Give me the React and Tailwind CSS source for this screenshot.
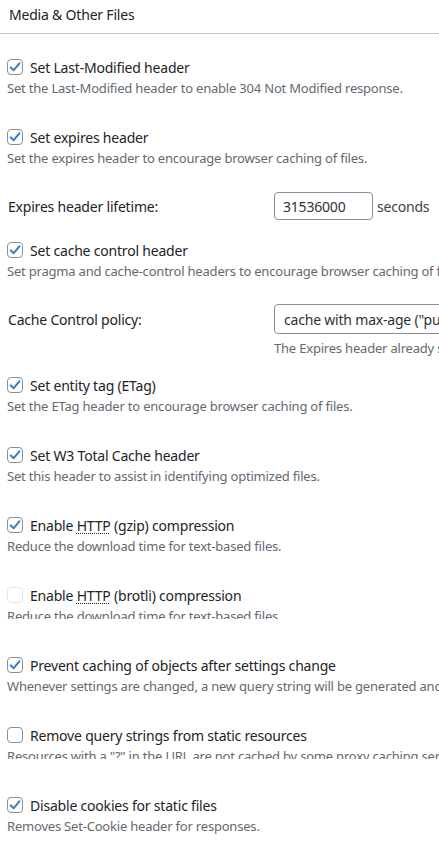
import React from "react";

const font = { fontFamily: '"Noto Sans", "Liberation Sans", sans-serif' };

function Check({ checked, disabled }) {
  return (
    <span
      className={
        "w-4 h-4 shrink-0 rounded-[4px] border bg-white flex items-center justify-center " +
        (disabled ? "border-[#e2e4e7]" : "border-[#8c8f94]")
      }
    >
      {checked && (
        <svg width="14" height="14" viewBox="0 0 14 14">
          <path
            d="M2.8 7.4 L5.7 10.2 L11.4 3.4"
            fill="none"
            stroke="#3582c4"
            strokeWidth="2.1"
            strokeLinecap="round"
            strokeLinejoin="round"
          />
        </svg>
      )}
    </span>
  );
}

function Abbr({ children }) {
  return <span className="underline decoration-dotted decoration-1 underline-offset-2">{children}</span>;
}

function Item({ checked = true, disabled, label, desc, clip, className = "" }) {
  return (
    <div className={"flex flex-col " + className}>
      <label className="flex items-center h-5 gap-2 text-[14px] text-[#1d2327] whitespace-nowrap">
        <Check checked={checked} disabled={disabled} />
        <span className="ml-[-1px]">{label}</span>
      </label>
      <div className={"mt-[1px] overflow-hidden " + (clip ? clip : "h-5")}>
        <p className="text-[13px] leading-5 text-[#646970] whitespace-nowrap">{desc}</p>
      </div>
    </div>
  );
}

export default function App() {
  return (
    <div className="w-[439px] min-h-[841px] bg-white overflow-hidden tracking-[-0.2px]" style={font}>
      <div className="h-[34px] border-b border-[#c3c4c7] pl-[9px] pt-[5px]">
        <h3 className="text-[14px] leading-5 text-[#1d2327]">Media &amp; Other Files</h3>
      </div>

      <div className="pl-[7px]">
        <Item
          className="mt-[23px]"
          label="Set Last-Modified header"
          desc="Set the Last-Modified header to enable 304 Not Modified response."
        />
        <Item
          className="mt-[29px]"
          label="Set expires header"
          desc="Set the expires header to encourage browser caching of files."
        />

        <div className="mt-[24px] flex items-center h-[28px] pl-[1px]">
          <span className="w-[266px] text-[14px] text-[#1d2327]">Expires header lifetime:</span>
          <div className="w-[99px] h-[28px] rounded-[4px] border border-[#8c8f94] pl-[8px] flex items-center text-[14px] text-[#2c3338]">
            31536000
          </div>
          <span className="ml-[4px] text-[14px] text-[#3c434a]">seconds</span>
        </div>

        <Item
          className="mt-[20px]"
          label="Set cache control header"
          desc="Set pragma and cache-control headers to encourage browser caching of files."
        />

        <div className="mt-[23px] flex pl-[1px]">
          <span className="w-[266px] shrink-0 h-[30px] flex items-center text-[14px] text-[#1d2327]">
            Cache Control policy:
          </span>
          <div className="flex flex-col shrink-0">
            <div className="w-[340px] h-[30px] rounded-[4px] border border-[#8c8f94] pl-[9px] flex items-center text-[14px] text-[#2c3338] whitespace-nowrap">
              cache with max-age ("public, max-age=EXPIRES_SECONDS")
            </div>
            <p className="mt-[4px] text-[13px] leading-5 text-[#646970] whitespace-nowrap">
              The Expires header already sets the max-age.
            </p>
          </div>
        </div>

        <Item
          className="mt-[17px]"
          label="Set entity tag (ETag)"
          desc="Set the ETag header to encourage browser caching of files."
        />
        <Item
          className="mt-[29px]"
          label="Set W3 Total Cache header"
          desc="Set this header to assist in identifying optimized files."
        />
        <Item
          className="mt-[29px]"
          label={<>Enable <Abbr>HTTP</Abbr> (gzip) compression</>}
          desc="Reduce the download time for text-based files."
        />
        <Item
          className="mt-[29px]"
          checked={false}
          disabled
          label={<>Enable <Abbr>HTTP</Abbr> (brotli) compression</>}
          desc="Reduce the download time for text-based files."
          clip="h-[13px]"
        />
        <Item
          className="mt-[36px]"
          label="Prevent caching of objects after settings change"
          desc="Whenever settings are changed, a new query string will be generated and appended to objects."
        />
        <Item
          className="mt-[29px]"
          checked={false}
          label="Remove query strings from static resources"
          desc={<>Resources with a "?" in the <Abbr>URL</Abbr> are not cached by some proxy caching servers.</>}
          clip="h-[13px]"
        />
        <Item
          className="mt-[36px]"
          label="Disable cookies for static files"
          desc="Removes Set-Cookie header for responses."
        />
      </div>
    </div>
  );
}
